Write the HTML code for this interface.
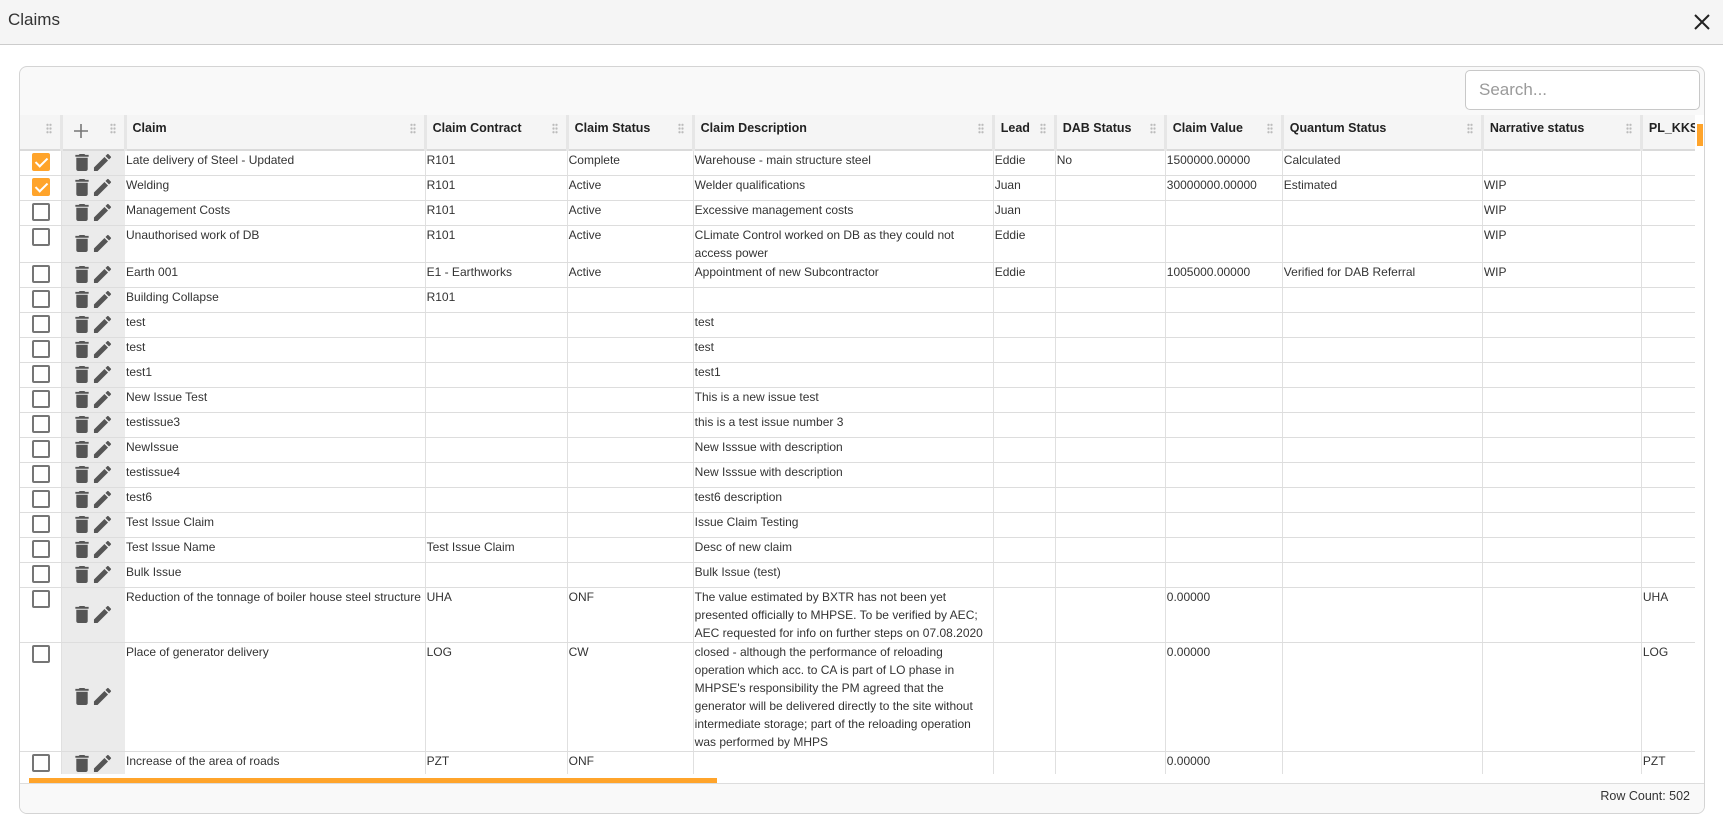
<!DOCTYPE html>
<html><head><meta charset="utf-8"><style>
*{box-sizing:border-box;margin:0;padding:0}
body{width:1723px;height:833px;overflow:hidden;background:#fff;font-family:"Liberation Sans",sans-serif;color:#333;position:relative}
.title{position:absolute;left:0;top:0;width:1723px;height:45px;background:#f5f5f5;border-bottom:1px solid #ccc}
.title span{position:absolute;left:8px;top:10px;font-size:17px;color:#333}
.close{position:absolute;left:1693px;top:13px}
.panel{position:absolute;left:19px;top:66px;width:1686px;height:748px;border:1px solid #d4d4d4;border-radius:8px;background:#f9f9f9;overflow:hidden}
.search{position:absolute;left:1445px;top:3px;width:235px;height:40px;border:1px solid #c8c8c8;border-radius:5px;background:#fff;font-size:17px;color:#9a9a9a;padding:9px 13px}
.grid{position:absolute;left:0;top:48px;width:1675px;height:659px;overflow:hidden;background:#fff}
.gbg{position:absolute;left:0;top:48px;width:1684px;height:669px;background:#fff}
table{border-collapse:collapse;table-layout:fixed;width:1783px}
th{height:35px;background:#f5f5f5;font-size:12.5px;font-weight:bold;text-align:left;padding:0 6px 8px;border-right:3px solid #e6e6e6;border-bottom:2px solid #dadada;position:relative;color:#222}
th .g{position:absolute;right:8px;top:8px;width:6px;height:11px;background:radial-gradient(circle,#bbb 1px,transparent 1.3px) 0 0/3px 3.7px}
td{font-size:12px;line-height:18px;vertical-align:top;padding:0 1px;border-right:1px solid #e0e0e0;border-bottom:1px solid #ddd;height:25px;white-space:nowrap;overflow:hidden}
td.w{white-space:normal}
td.c0{padding:2px 0 0 12px}
td.c1{background:#ebebeb;vertical-align:middle;padding:0 0 0 12px;border-right:none}
.cb{width:18px;height:18px;border:2px solid #757575;border-radius:2px;background:#fff;position:relative}
.cb.on{background:#ffa42b;border-color:#ffa42b}
.cb.on:after{content:"";position:absolute;left:4px;top:0px;width:5px;height:10px;border:solid #fff;border-width:0 2px 2px 0;transform:rotate(45deg)}
.ic svg{display:inline-block;vertical-align:middle}
.vs{position:absolute;left:1677px;top:57px;width:6px;height:22px;background:#ffa42b}
.hs{position:absolute;left:9px;top:711px;width:688px;height:6px;background:#ffa42b}
.foot{position:absolute;left:0;top:716px;width:100%;height:32px;border-top:1px solid #ddd;background:#f9f9f9}
.foot span{position:absolute;right:14px;top:5px;font-size:12.5px;color:#333}
</style></head><body>
<div class="title"><span>Claims</span>
<svg class="close" width="18" height="18" viewBox="0 0 18 18"><path d="M2 2L16 16M16 2L2 16" stroke="#222" stroke-width="2"/></svg></div>
<div class="panel">
<div class="search">Search...</div>
<div class="gbg"></div>
<div class="grid">
<table>
<colgroup><col style="width:41px"><col style="width:64px"><col style="width:300px"><col style="width:142px"><col style="width:126px"><col style="width:300px"><col style="width:62px"><col style="width:110px"><col style="width:117px"><col style="width:200px"><col style="width:159px"><col style="width:160px"></colgroup>
<thead><tr><th><i class="g"></i></th><th style="padding-left:9px"><svg width="18" height="18" viewBox="0 0 18 18" style="vertical-align:middle;margin-top:6px"><path d="M9 2V16M2 9H16" stroke="#777" stroke-width="1.6"/></svg><i class="g"></i></th>
<th>Claim<i class="g"></i></th><th>Claim Contract<i class="g"></i></th><th>Claim Status<i class="g"></i></th><th>Claim Description<i class="g"></i></th><th>Lead<i class="g"></i></th><th>DAB Status<i class="g"></i></th><th>Claim Value<i class="g"></i></th><th>Quantum Status<i class="g"></i></th><th>Narrative status<i class="g"></i></th><th>PL_KKS<i class="g"></i></th></tr></thead>
<tbody id="b"></tbody></table>
</div>
<div class="vs"></div>
<div class="hs"></div>
<div class="foot"><span>Row Count: 502</span></div>
</div>
<script>
var T='<svg width="16" height="19" viewBox="4 2 16 20"><path fill="#555" d="M6 19c0 1.1.9 2 2 2h8c1.1 0 2-.9 2-2V7H6v12zM19 4h-3.5l-1-1h-5l-1 1H5v2h14V4z"/></svg><svg width="19" height="19" viewBox="2 2 20 20" style="margin-left:3px"><path fill="#555" d="M3 17.25V21h3.75L17.81 9.94l-3.75-3.75L3 17.25zM20.71 7.04a1 1 0 000-1.41l-2.34-2.34a1 1 0 00-1.41 0l-1.83 1.830 3.75 3.75 1.83-1.83z"/></svg>';
var R=[
[1,"Late delivery of Steel - Updated","R101","Complete","Warehouse - main structure steel","Eddie","No","1500000.00000","Calculated","",""],
[1,"Welding","R101","Active","Welder qualifications","Juan","","30000000.00000","Estimated","WIP",""],
[0,"Management Costs","R101","Active","Excessive management costs","Juan","","","","WIP",""],
[0,"Unauthorised work of DB","R101","Active","CLimate Control worked on DB as they could not access power","Eddie","","","","WIP",""],
[0,"Earth 001","E1 - Earthworks","Active","Appointment of new Subcontractor","Eddie","","1005000.00000","Verified for DAB Referral","WIP",""],
[0,"Building Collapse","R101","","","","","","","",""],
[0,"test","","","test","","","","","",""],
[0,"test","","","test","","","","","",""],
[0,"test1","","","test1","","","","","",""],
[0,"New Issue Test","","","This is a new issue test","","","","","",""],
[0,"testissue3","","","this is a test issue number 3","","","","","",""],
[0,"NewIssue","","","New Isssue with description","","","","","",""],
[0,"testissue4","","","New Isssue with description","","","","","",""],
[0,"test6","","","test6 description","","","","","",""],
[0,"Test Issue Claim","","","Issue Claim Testing","","","","","",""],
[0,"Test Issue Name","Test Issue Claim","","Desc of new claim","","","","","",""],
[0,"Bulk Issue","","","Bulk Issue (test)","","","","","",""],
[0,"Reduction of the tonnage of boiler house steel structure","UHA","ONF","The value estimated by BXTR has not been yet presented officially to MHPSE. To be verified by AEC; AEC requested for info on further steps on 07.08.2020","","","0.00000","","","UHA"],
[0,"Place of generator delivery","LOG","CW","closed - although the performance of reloading operation which acc. to CA is part of LO phase in MHPSE's responsibility the PM agreed that the generator will be delivered directly to the site without intermediate storage; part of the reloading operation was performed by MHPS","","","0.00000","","","LOG"],
[0,"Increase of the area of roads","PZT","ONF","","","","0.00000","","","PZT"]];
var h='';R.forEach(function(r){h+='<tr><td class="c0"><div class="cb'+(r[0]?' on':'')+'"></div></td><td class="c1 ic">'+T+'</td>';
for(var i=1;i<11;i++)h+='<td'+(i==4?' class="w"':'')+'>'+r[i]+'</td>';h+='</tr>';});
document.getElementById('b').innerHTML=h;
</script>
</body></html>
